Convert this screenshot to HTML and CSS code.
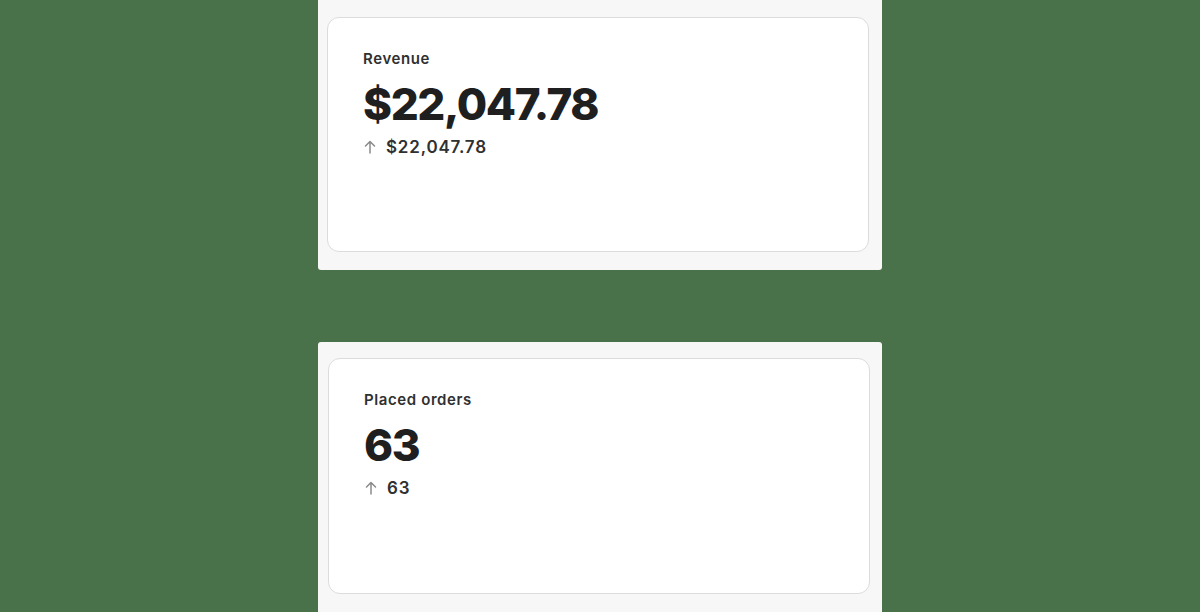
FILE: index.html
```html
<!DOCTYPE html>
<html>
<head>
<title>Analytics</title>
<meta charset="UTF-8">
<meta name="viewport" content="width=device-width, initial-scale=1.0">
<link rel="stylesheet" href="styles.css">
</head>
<body>
<div class="page">
  <div class="panel panel-first">
    <div class="card">
      <div class="label">Revenue</div>
      <div class="value">$22,047.78</div>
      <div class="change">
        <svg class="arrow" width="16" height="16" viewBox="0 0 16 16"><path d="M8 14V2.5M3.5 7L8 2.5L12.5 7" fill="none" stroke="currentColor" stroke-width="1.5" stroke-linecap="round" stroke-linejoin="round"/></svg>
        <span>$22,047.78</span>
      </div>
    </div>
  </div>
  <div class="panel panel-second">
    <div class="card">
      <div class="label">Placed orders</div>
      <div class="value">63</div>
      <div class="change">
        <svg class="arrow" width="16" height="16" viewBox="0 0 16 16"><path d="M8 14V2.5M3.5 7L8 2.5L12.5 7" fill="none" stroke="currentColor" stroke-width="1.5" stroke-linecap="round" stroke-linejoin="round"/></svg>
        <span>63</span>
      </div>
    </div>
  </div>
</div>
</body>
</html>
```

FILE: styles.css
```css
body {
  margin: 0;
  background-color: #49714a;
  font-family: Inter, "Liberation Sans", sans-serif;
  color: #303030;
}
.page {
  display: flex;
  flex-direction: column;
  align-items: center;
  gap: 72px;
  height: 612px;
  overflow: hidden;
}
.panel {
  width: 564px;
  height: 270px;
  box-sizing: border-box;
  background-color: #f7f7f7;
}
.panel-first {
  padding: 17px 13px 18px 9px;
  border-radius: 0 0 3px 3px;
}
.panel-second {
  padding: 16px 12px 18px 10px;
  border-radius: 3px 3px 0 0;
}
.card {
  height: 100%;
  box-sizing: border-box;
  background-color: #fff;
  border: 1px solid #dcdcdc;
  border-radius: 12px;
  padding: 31px 35px;
}
.label {
  font-size: 15px;
  font-weight: 600;
  letter-spacing: 0.6px;
  line-height: 20px;
}
.value {
  font-size: 44px;
  font-weight: 800;
  letter-spacing: -1.4px;
  line-height: 52px;
  margin-top: 9px;
  color: #1f1f1f;
}
.change {
  display: flex;
  align-items: center;
  gap: 8px;
  margin-top: 6px;
  font-size: 17px;
  font-weight: 600;
  letter-spacing: 0.8px;
  line-height: 22px;
}
.arrow {
  color: #8a8a8a;
  margin-left: -1px;
}
```
